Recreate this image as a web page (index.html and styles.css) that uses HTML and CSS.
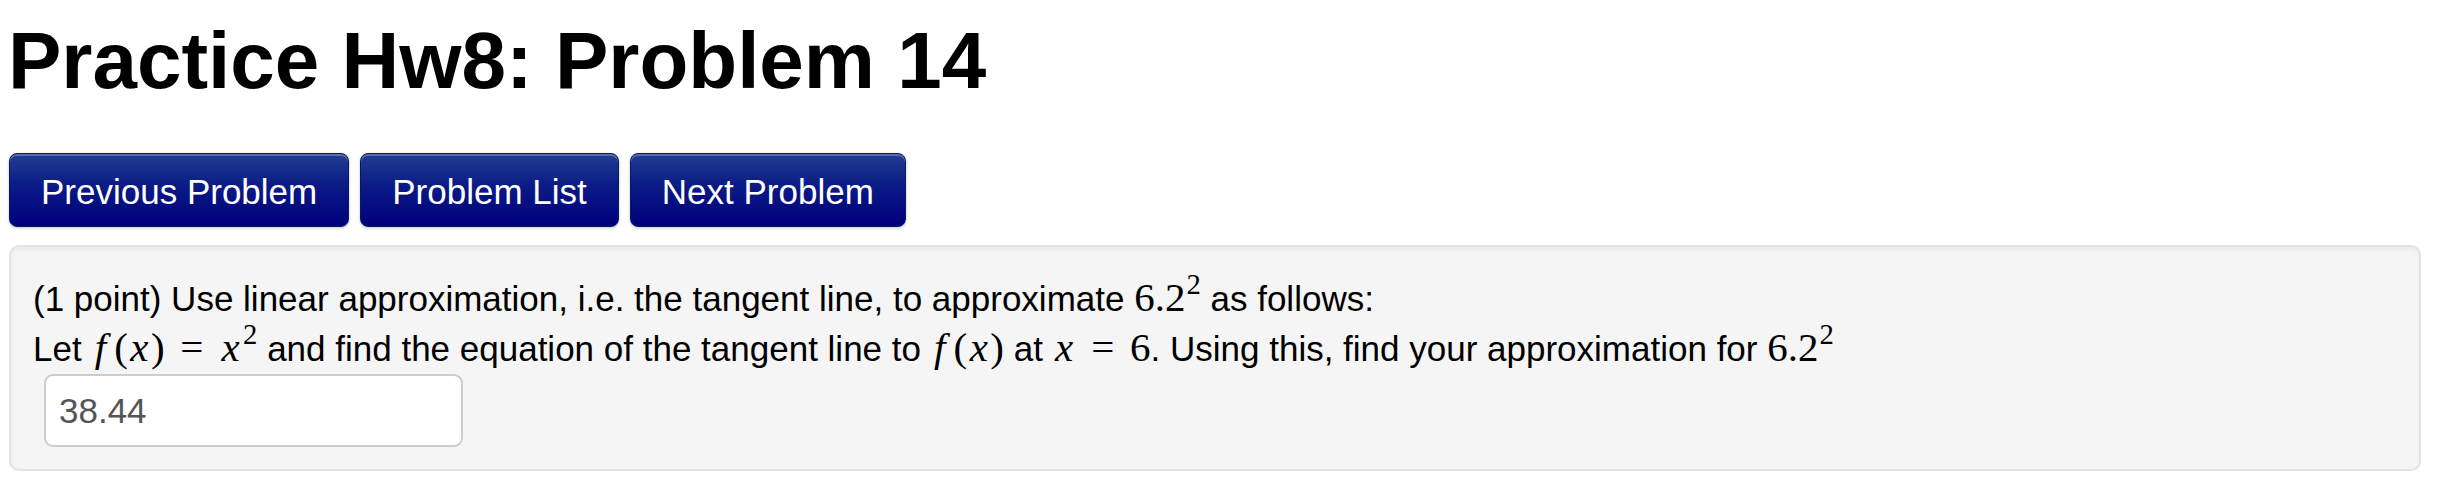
FILE: index.html
```html
<!DOCTYPE html>
<html lang="en">
<head>
    <meta charset="UTF-8">
    <meta name="viewport" content="width=device-width, initial-scale=1.0">
    <title>Practice Hw8: Problem 14</title>
    <link rel="stylesheet" href="styles.css">
</head>
<body>
    <h1>Practice Hw8: Problem 14</h1>

    <div class="problem-nav">
        <a href="#" class="nav-button">Previous Problem</a>
        <a href="#" class="nav-button">Problem List</a>
        <a href="#" class="nav-button">Next Problem</a>
    </div>

    <div class="problem">
        <p class="problem-text">
            (1 point) Use linear approximation, i.e. the tangent line, to approximate
            <span class="math">6.2<sup>2</sup></span> as follows:<br>
            Let <span class="math"><i class="fn">f</i>(<i>x</i>)<span class="rel">=</span><i>x</i><sup>2</sup></span>
            and find the equation of the tangent line to
            <span class="math"><i class="fn">f</i>(<i>x</i>)</span> at
            <span class="math"><i>x</i><span class="rel">=</span>6</span>. Using this, find your approximation for
            <span class="math">6.2<sup>2</sup></span>
        </p>
        <input type="text" class="answer" value="38.44">
    </div>
</body>
</html>
```

FILE: styles.css
```css
body {
    margin: 0; padding: 0 21px 0 9px; background: #fff; color: #000;
    font-family: "Liberation Sans", Arial, Helvetica, sans-serif; font-size: 35px;
}
h1 {
    margin: 16px 0 47px -1px; font-size: 80px; line-height: 90px; font-weight: bold;
}

/* Navigation buttons */
.problem-nav {
    display: flex; gap: 11px; margin-bottom: 18px;
}
.nav-button {
    display: block; height: 74px; box-sizing: border-box; padding: 18px 31px 14px;
    font-size: 35px; line-height: 40px; color: #fff; text-decoration: none;
    background: linear-gradient(#213e90, #0a1a86 45%, #00007c);
    border: 1px solid #0b1860; border-radius: 8px;
    box-shadow: inset 0 2px 0 rgba(255,255,255,0.25), 0 1px 3px rgba(0,0,0,0.25);
}

/* Problem well */
.problem {
    background: #f5f5f5; border: 2px solid #e3e3e3; border-radius: 10px;
    box-shadow: inset 0 3px 3px rgba(0,0,0,0.04);
    padding: 27px 22px 22px;
}
.problem-text {
    margin: 0; line-height: 50px;
}

/* Math, set like MathJax output */
.math {
    font-family: "Liberation Serif", "Times New Roman", serif; font-size: 41px; line-height: 1;
}
.math i { font-style: italic; padding: 0 0.06em; }
.math i.fn { padding: 0 0.2em 0 0.08em; }
.math sup {
    font-size: 0.7em; line-height: 0; vertical-align: 0.6em; margin-left: 1px;
}
.math .rel { margin: 0 0.38em; }

.answer {
    display: block; margin-left: 11px; width: 419px; height: 73px; box-sizing: border-box;
    padding: 0 13px; font-family: "Liberation Sans", Arial, sans-serif; font-size: 35px; color: #555;
    background: #fff; border: 2px solid #ccc; border-radius: 9px; outline: none;
}
```
